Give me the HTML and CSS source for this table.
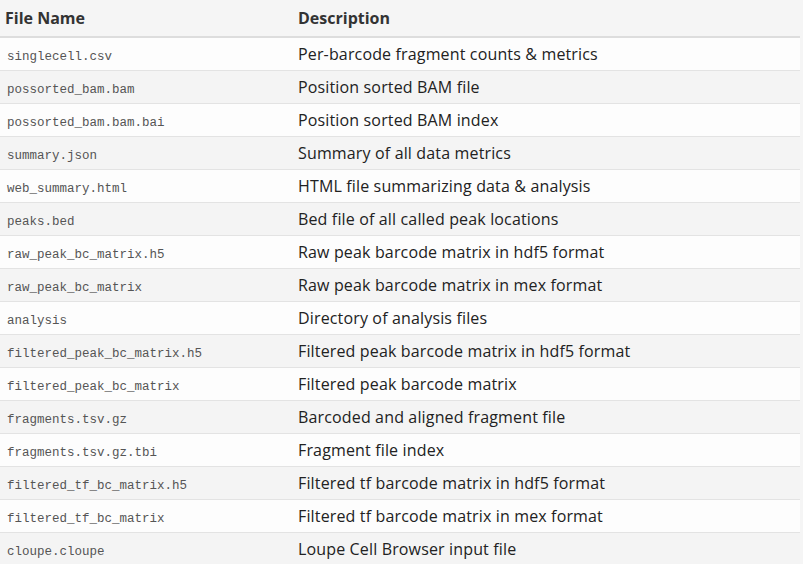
FILE: index.html
```html
<!DOCTYPE html>
<html>
<head>
<meta charset="utf-8">
<link rel="stylesheet" href="styles.css">
</head>
<body>
<table class="files">
  <thead>
    <tr><th class="col-name">File Name</th><th>Description</th></tr>
  </thead>
  <tbody>
    <tr><td><code>singlecell.csv</code></td><td>Per-barcode fragment counts &amp; metrics</td></tr>
    <tr><td><code>possorted_bam.bam</code></td><td>Position sorted BAM file</td></tr>
    <tr><td><code>possorted_bam.bam.bai</code></td><td>Position sorted BAM index</td></tr>
    <tr><td><code>summary.json</code></td><td>Summary of all data metrics</td></tr>
    <tr><td><code>web_summary.html</code></td><td>HTML file summarizing data &amp; analysis</td></tr>
    <tr><td><code>peaks.bed</code></td><td>Bed file of all called peak locations</td></tr>
    <tr><td><code>raw_peak_bc_matrix.h5</code></td><td>Raw peak barcode matrix in hdf5 format</td></tr>
    <tr><td><code>raw_peak_bc_matrix</code></td><td>Raw peak barcode matrix in mex format</td></tr>
    <tr><td><code>analysis</code></td><td>Directory of analysis files</td></tr>
    <tr><td><code>filtered_peak_bc_matrix.h5</code></td><td>Filtered peak barcode matrix in hdf5 format</td></tr>
    <tr><td><code>filtered_peak_bc_matrix</code></td><td>Filtered peak barcode matrix</td></tr>
    <tr><td><code>fragments.tsv.gz</code></td><td>Barcoded and aligned fragment file</td></tr>
    <tr><td><code>fragments.tsv.gz.tbi</code></td><td>Fragment file index</td></tr>
    <tr><td><code>filtered_tf_bc_matrix.h5</code></td><td>Filtered tf barcode matrix in hdf5 format</td></tr>
    <tr><td><code>filtered_tf_bc_matrix</code></td><td>Filtered tf barcode matrix in mex format</td></tr>
    <tr><td><code>cloupe.cloupe</code></td><td>Loupe Cell Browser input file</td></tr>
  </tbody>
</table>
</body>
</html>
```

FILE: styles.css
```css
html, body {
  margin: 0;
  padding: 0;
  background: #f5f5f5;
}
body {
  font-family: "Open Sans", "Noto Sans", sans-serif;
  color: #333;
}
.files {
  width: 800px;
  border-collapse: collapse;
  border-spacing: 0;
}
.files th {
  text-align: left;
  font-weight: 700;
  font-size: 16px;
  color: #333;
  height: 36px;
  padding: 0 5px;
  vertical-align: middle;
  border-bottom: 2px solid #dddddd;
}
.files .col-name {
  width: 283px;
}
.files td {
  height: 32px;
  padding: 0 5px;
  vertical-align: middle;
  font-size: 16px;
  letter-spacing: 0.15px;
  border-bottom: 1px solid #e3e3e3;
  color: #222;
}
.files tbody tr:nth-child(odd) td {
  background: #fdfdfd;
}
.files tbody tr:nth-child(even) td {
  background: #f4f4f4;
}
.files code {
  font-family: "Liberation Mono", "DejaVu Sans Mono", monospace;
  font-size: 12.5px;
  letter-spacing: 0;
  color: #555;
  padding-left: 2px;
}
```
